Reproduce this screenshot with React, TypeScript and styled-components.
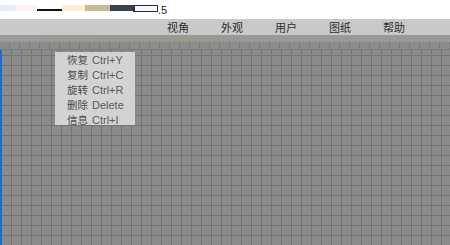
import styled, { createGlobalStyle } from "styled-components";

const GlobalStyle = createGlobalStyle`
  html, body {
    margin: 0;
    padding: 0;
    background: #ffffff;
    overflow: hidden;
  }
  body {
    font-family: "Liberation Sans", "Noto Sans CJK SC", sans-serif;
  }
`;

const Page = styled.div`
  width: 450px;
  height: 245px;
  display: flex;
  flex-direction: column;
  overflow: hidden;
`;

const SwatchStrip = styled.div`
  height: 19px;
  display: flex;
  align-items: flex-start;
  padding-top: 5px;
  box-sizing: border-box;
`;

const Swatch = styled.div<{ $w: number; $bg: string }>`
  width: ${(p) => p.$w}px;
  height: 6px;
  background: ${(p) => p.$bg};
`;

const LineSwatch = styled.div<{ $w: number }>`
  width: ${(p) => p.$w}px;
  height: 6px;
  display: flex;
  align-items: flex-end;
  &::after {
    content: "";
    width: 100%;
    height: 2px;
    background: #111;
  }
`;

const BoxSwatch = styled.div`
  width: 25px;
  height: 7px;
  box-sizing: border-box;
  border: 1px solid #2a2f36;
  border-left-width: 2px;
  background: #f4f8fc;
`;

const StripValue = styled.span`
  font-size: 11px;
  line-height: 8px;
  color: #222;
  margin-top: 1px;
`;

const MenuBar = styled.div`
  height: 16px;
  background: #c9c9c9;
  display: flex;
  align-items: center;
  padding-left: 167px;
  gap: 32px;
`;

const MenuItem = styled.span`
  font-family: "Noto Sans CJK SC", sans-serif;
  font-size: 11px;
  line-height: 16px;
  color: #2e2e2e;
  width: 22px;
  white-space: nowrap;
`;

const Band = styled.div`
  height: 15px;
  display: flex;
  flex-direction: column;
`;

const BandTop = styled.div`
  height: 7px;
  background: linear-gradient(90deg, #9c9c9a 0, #979c95 60px, #959a91 180px, #9a9a9a 300px, #999999 450px);
`;

const BandBottom = styled.div`
  height: 8px;
  background-color: #8c8c8c;
  background-image: repeating-linear-gradient(90deg, transparent 0 9px, #7c7c7c 9px 10px);
  border-bottom: 1px solid #7a7a7a;
`;

const Canvas = styled.div`
  flex: 1;
  position: relative;
  background-color: #8b8b8b;
  background-image:
    repeating-linear-gradient(90deg, transparent 0 9px, #737373 9px 10px),
    repeating-linear-gradient(0deg, transparent 0 9px, #737373 9px 10px);
  border-left: 2px solid #1f6fc4;
`;

const ContextMenu = styled.div`
  position: absolute;
  left: 53px;
  top: 2px;
  width: 80px;
  height: 73px;
  box-sizing: border-box;
  background: #d3d3d3;
  padding: 0 0 0 12px;
  display: flex;
  flex-direction: column;
`;

const MenuRow = styled.div`
  height: 15px;
  display: flex;
  align-items: center;
  gap: 4px;
  white-space: nowrap;
`;

const RowLabel = styled.span`
  font-family: "Noto Sans CJK SC", sans-serif;
  font-size: 10.5px;
  color: #4a4a4a;
`;

const RowKey = styled.span`
  font-family: "Liberation Sans Narrow", "Liberation Sans", sans-serif;
  font-size: 11px;
  color: #5a5a5a;
`;

const swatches = [
  { w: 15, bg: "#e6edf6" },
  { w: 22, bg: "#fcf1f5" },
];

const swatches2 = [
  { w: 23, bg: "#fbf1d2" },
  { w: 25, bg: "#c6bc98" },
  { w: 23, bg: "#39414b" },
];

const menus = ["视角", "外观", "用户", "图纸", "帮助"];

const actions = [
  { label: "恢复", key: "Ctrl+Y" },
  { label: "复制", key: "Ctrl+C" },
  { label: "旋转", key: "Ctrl+R" },
  { label: "删除", key: "Delete" },
  { label: "信息", key: "Ctrl+I" },
];

export default function App() {
  return (
    <Page>
      <GlobalStyle />
      <SwatchStrip>
        {swatches.map((s, i) => (
          <Swatch key={i} $w={s.w} $bg={s.bg} />
        ))}
        <LineSwatch $w={25} />
        {swatches2.map((s, i) => (
          <Swatch key={i} $w={s.w} $bg={s.bg} />
        ))}
        <BoxSwatch />
        <StripValue>.5</StripValue>
      </SwatchStrip>
      <MenuBar>
        {menus.map((m) => (
          <MenuItem key={m}>{m}</MenuItem>
        ))}
      </MenuBar>
      <Band>
        <BandTop />
        <BandBottom />
      </Band>
      <Canvas>
        <ContextMenu>
          {actions.map((a) => (
            <MenuRow key={a.label}>
              <RowLabel>{a.label}</RowLabel>
              <RowKey>{a.key}</RowKey>
            </MenuRow>
          ))}
        </ContextMenu>
      </Canvas>
    </Page>
  );
}
